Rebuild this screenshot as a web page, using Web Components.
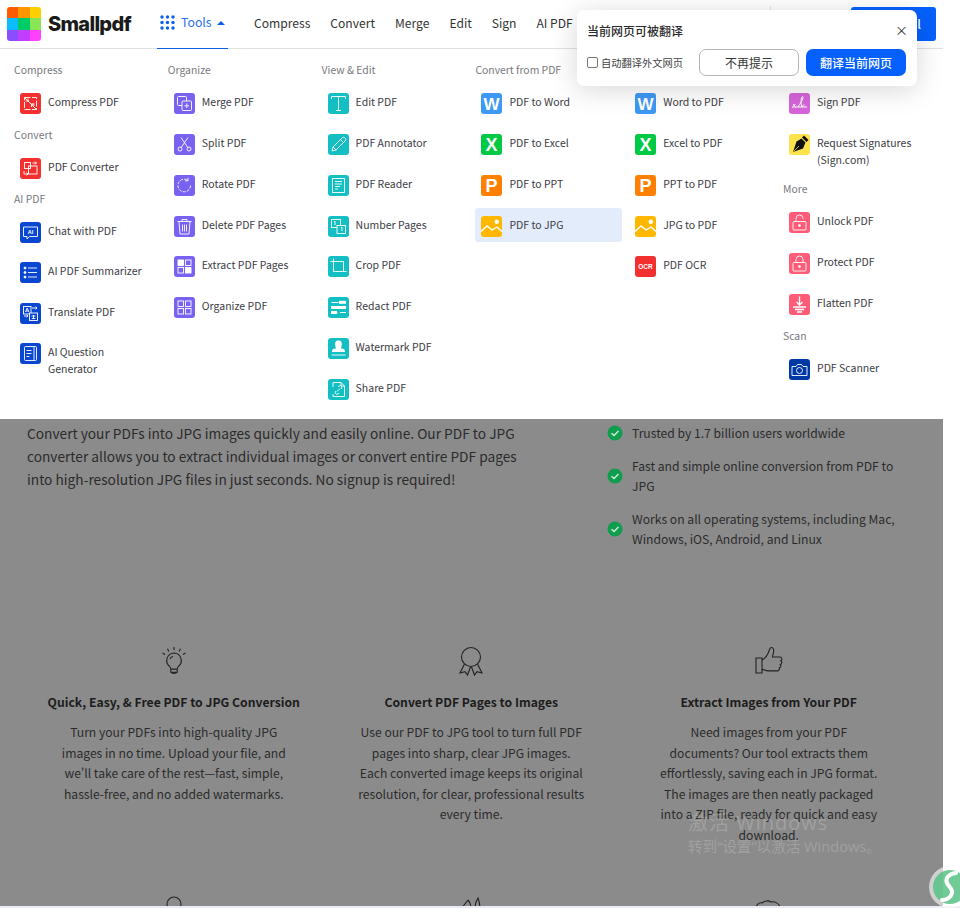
<!DOCTYPE html>
<html lang="en">
<head>
<meta charset="utf-8">
<title>PDF to JPG</title>
<style>
  html, body { margin: 0; height: 908px; overflow: hidden; background: #fff; }
  body { font-family: "Noto Sans CJK SC", "Noto Sans", sans-serif; color: #2b2b2b; position: relative; }
  .shell { width: 943px; }
  .foot-line { height: 2px; background: #e8ecf4; }
</style>
</head>
<body>
<div class="shell">
  <site-header>
    <nav-link>Compress</nav-link>
    <nav-link>Convert</nav-link>
    <nav-link>Merge</nav-link>
    <nav-link>Edit</nav-link>
    <nav-link>Sign</nav-link>
    <nav-link>AI PDF</nav-link>
  </site-header>

  <tools-menu>
    <menu-column>
      <menu-group heading="Compress"><tool-item icon="compress">Compress PDF</tool-item></menu-group>
      <menu-group heading="Convert"><tool-item icon="convert">PDF Converter</tool-item></menu-group>
      <menu-group heading="AI PDF" style="margin-top:-1px">
        <tool-item icon="chat">Chat with PDF</tool-item>
        <tool-item icon="summary" style="margin-top:-1px">AI PDF Summarizer</tool-item>
        <tool-item icon="translate">Translate PDF</tool-item>
        <tool-item icon="question" style="margin-top:-1px">AI Question<br>Generator</tool-item>
      </menu-group>
    </menu-column>
    <menu-column>
      <menu-group heading="Organize">
        <tool-item icon="merge">Merge PDF</tool-item>
        <tool-item icon="split">Split PDF</tool-item>
        <tool-item icon="rotate">Rotate PDF</tool-item>
        <tool-item icon="trash">Delete PDF Pages</tool-item>
        <tool-item icon="extract">Extract PDF Pages</tool-item>
        <tool-item icon="organize">Organize PDF</tool-item>
      </menu-group>
    </menu-column>
    <menu-column>
      <menu-group heading="View &amp; Edit">
        <tool-item icon="edit">Edit PDF</tool-item>
        <tool-item icon="annotate">PDF Annotator</tool-item>
        <tool-item icon="reader">PDF Reader</tool-item>
        <tool-item icon="number">Number Pages</tool-item>
        <tool-item icon="crop">Crop PDF</tool-item>
        <tool-item icon="redact">Redact PDF</tool-item>
        <tool-item icon="stamp">Watermark PDF</tool-item>
        <tool-item icon="share">Share PDF</tool-item>
      </menu-group>
    </menu-column>
    <menu-column>
      <menu-group heading="Convert from PDF">
        <tool-item icon="word">PDF to Word</tool-item>
        <tool-item icon="excel">PDF to Excel</tool-item>
        <tool-item icon="ppt">PDF to PPT</tool-item>
        <tool-item icon="jpg" active>PDF to JPG</tool-item>
      </menu-group>
    </menu-column>
    <menu-column>
      <menu-group heading="Convert to PDF">
        <tool-item icon="word">Word to PDF</tool-item>
        <tool-item icon="excel">Excel to PDF</tool-item>
        <tool-item icon="ppt">PPT to PDF</tool-item>
        <tool-item icon="jpg">JPG to PDF</tool-item>
        <tool-item icon="ocr">PDF OCR</tool-item>
      </menu-group>
    </menu-column>
    <menu-column>
      <menu-group heading="Sign">
        <tool-item icon="sign">Sign PDF</tool-item>
        <tool-item icon="pen">Request Signatures<br>(Sign.com)</tool-item>
      </menu-group>
      <menu-group heading="More">
        <tool-item icon="unlock">Unlock PDF</tool-item>
        <tool-item icon="lock">Protect PDF</tool-item>
        <tool-item icon="flatten">Flatten PDF</tool-item>
      </menu-group>
      <menu-group heading="Scan"><tool-item icon="camera">PDF Scanner</tool-item></menu-group>
    </menu-column>
  </tools-menu>

  <dimmed-page>
    <intro-row>
      <span slot="lead">Convert your PDFs into JPG images quickly and easily online. Our PDF to JPG converter allows you to extract individual images or convert entire PDF pages into high-resolution JPG files in just seconds. No signup is required!</span>
      <check-item>Trusted by 1.7 billion users worldwide</check-item>
      <check-item>Fast and simple online conversion from PDF to JPG</check-item>
      <check-item>Works on all operating systems, including Mac, Windows, iOS, Android, and Linux</check-item>
    </intro-row>
    <feature-grid>
      <feature-card heading="Quick, Easy, &amp; Free PDF to JPG Conversion">
        <svg slot="icon" viewBox="0 0 32 32"><path d="M16 8a7.500 7.500 0 0 0-4.500 13.300c.8.700 1.200 1.500 1.200 2.700h6.600c0-1.200.4-2 1.200-2.700A7.500 7.500 0 0 0 16 8zM12.800 24.200h6.400v3h-6.400zM13.300 27.200c.3 1.700 5.100 1.700 5.400 0M12 14c.6-1.500 1.700-2.400 3-2.800M16 2v3M9.500 3.800l1.300 2.600M22.500 3.800l-1.300 2.600M4.500 8l2.500 1.500M27.500 8l-2.500 1.500"/></svg>
        Turn your PDFs into high-quality JPG images in no time. Upload your file, and we’ll take care of the rest—fast, simple, hassle-free, and no added watermarks.
      </feature-card>
      <feature-card heading="Convert PDF Pages to Images">
        <svg slot="icon" viewBox="0 0 32 32"><circle cx="16" cy="12" r="9.500"/><path d="M9.500 19 5 28l5-1.300L12.500 30l3-8M22.500 19 27 28l-5-1.300L19.500 30l-3-8"/></svg>
        Use our PDF to JPG tool to turn full PDF pages into sharp, clear JPG images. Each converted image keeps its original resolution, for clear, professional results every time.
      </feature-card>
      <feature-card heading="Extract Images from Your PDF" narrow>
        <svg slot="icon" viewBox="0 0 32 32"><path d="M3 13h6v15H3zM9 15c4-2 6-6 7-9 .5-2 1-3.500 2.500-3.500 2 0 2.500 2.500 2 5l-1 4.500h7.500c2 0 2.500 3 .8 3.700 1.500.8 1.200 3.300-.5 3.800 1 1 .6 3-1 3.400.5 1.300-.4 3-2 3H15c-2.500 0-4-1.500-6-1.500"/></svg>
        Need images from your PDF documents? Our tool extracts them effortlessly, saving each in JPG format. The images are then neatly packaged into a ZIP file, ready for quick and easy download.
      </feature-card>
      <feature-card>
        <svg slot="icon" viewBox="0 0 32 32"><circle cx="16" cy="9" r="7"/></svg>
      </feature-card>
      <feature-card>
        <svg slot="icon" viewBox="0 0 32 32"><path d="M6 14 13 5M13 5c2 2 3 5 3 9M20 14c0-5 1-8 3-11 1 3 2 6 2 11"/></svg>
      </feature-card>
      <feature-card>
        <svg slot="icon" viewBox="0 0 32 32"><path d="M3 14c0-4 3-7 6-6 2-2 6-3 9-1 3-1 8 1 9 5"/></svg>
      </feature-card>
    </feature-grid>
  </dimmed-page>
</div>
<div class="foot-line"></div>

<translate-popup></translate-popup>
<activation-note></activation-note>
<chat-bubble></chat-bubble>

<script>
// white line art on a coloured tile, viewBox 0 0 21 21
const RED = "#f23030", BLUE = "#0a47d1", PURPLE = "#7961f2", TEAL = "#13bfc2";
const letter = (c) => `<text x="10.500" y="17" text-anchor="middle" font-family="Liberation Sans, sans-serif" font-weight="700" font-size="18" fill="#fff" stroke="none">${c}</text>`;
const photo = `<path d="M0 15.500 6 10l5 4 5-3 5 4.500" stroke-width="1.400"/><circle cx="15.800" cy="5.700" r="2.200" fill="#fff" stroke="none"/>`;

const TOOL_ICONS = {
  compress: [RED, `<rect x="4.500" y="4.500" width="12" height="12" stroke-dasharray="6 1.500"/><path d="M4.500 4.500l12 12M8 9V5.500M9 8H5.500M12 10.500l2.500 2.500M11.500 14v-3h3"/>`],
  convert: [RED, `<rect x="8.500" y="8" width="8.500" height="8"/><rect x="4.500" y="4.500" width="6" height="6"/><path d="M12.500 5h4M15 3.500 16.500 5 15 6.500M4 13v3h4M6.500 14.500 8 16l-1.500 1.500"/>`],
  chat: [BLUE, `<path d="M3.500 5h14v9.500H9.500L7 17v-2.500H3.500z"/><text x="10.500" y="12" text-anchor="middle" font-family="Liberation Sans, sans-serif" font-weight="700" font-size="5.500" fill="#fff" stroke="none">AI</text>`],
  summary: [BLUE, `<path d="M8 6h9M8 10.500h9M8 15h9"/><circle cx="5" cy="6" r="1" fill="#fff"/><circle cx="5" cy="10.500" r="1" fill="#fff"/><circle cx="5" cy="15" r="1" fill="#fff"/>`],
  translate: [BLUE, `<rect x="3.500" y="3.500" width="7.500" height="7.500"/><rect x="9.500" y="10" width="8" height="7.500" fill="${BLUE}"/><path d="M5.500 9l1.700-4 1.700 4M6 8h2.500M12 5h5M15.500 3.800 17 5l-1.500 1.200M4 13h3.500M6.500 11.800 8 13l-1.500 1.200M11.500 13h4M13.500 12v4M11.800 15.500h3.500"/>`],
  question: [BLUE, `<rect x="4.500" y="3.500" width="12" height="14" rx="1"/><path d="M14 3.500v14M6.500 7.500h5M6.500 10.500h5M6.500 13.500h3"/>`],
  merge: [PURPLE, `<rect x="3.500" y="3.500" width="9" height="9" rx="1"/><rect x="8" y="8" width="9.500" height="9.500" rx="1" fill="${PURPLE}"/><path d="M12.800 10.500v4.500M10.500 12.800H15"/>`],
  split: [PURPLE, `<circle cx="6" cy="15" r="2"/><circle cx="15" cy="15" r="2"/><path d="M7.200 13.500 14 3.500M13.800 13.500 7 3.500"/>`],
  rotate: [PURPLE, `<path d="M16.500 10.500a6.300 6.300 0 1 1-2.500-5" stroke-dasharray="3 1.200"/><path d="M14 2.800v3h-3"/>`],
  trash: [PURPLE, `<path d="M3.500 5.500h14M8 5.500V3.500h5v2M5 5.500l1 12.500h9l1-12.500M8.500 8.500v7M10.500 8.500v7M12.500 8.500v7"/>`],
  extract: [PURPLE, `<rect x="4" y="4" width="5.500" height="5.500" fill="#fff"/><rect x="11.500" y="4" width="5.500" height="5.500"/><rect x="4" y="11.500" width="5.500" height="5.500"/><rect x="11.500" y="11.500" width="5.500" height="5.500" fill="#fff"/>`],
  organize: [PURPLE, `<rect x="4" y="4" width="5.500" height="5.500"/><rect x="11.500" y="4" width="5.500" height="5.500"/><rect x="4" y="11.500" width="5.500" height="5.500"/><rect x="11.500" y="11.500" width="5.500" height="5.500"/>`],
  edit: [TEAL, `<path d="M3.500 6V3.500h14V6M10.500 3.500v14M8 17.500h5"/>`],
  annotate: [TEAL, `<path d="M4 17l1-4L14 4c1-1 2-1 3 0s1 2 0 3l-9 9zM12.500 5.500l3 3M5 13l3 3"/>`],
  reader: [TEAL, `<rect x="4.500" y="3.500" width="12" height="14"/><path d="M7 6.500h7M7 9h7M7 11.500h5M7 14h3"/>`],
  number: [TEAL, `<rect x="3.500" y="3.500" width="9" height="8"/><rect x="9" y="9.500" width="8.500" height="8" fill="${TEAL}"/><path d="M6 6l1-.8V9M13 12l1-.8V15"/>`],
  crop: [TEAL, `<path d="M5.500 2.500v13h13M2.500 5.500h13v10"/>`],
  redact: [TEAL, `<path d="M3.500 5.500h7M13 5.500h5M3.500 15.500h6M12 15.500h6" stroke-width="1"/><rect x="3" y="9" width="15" height="3" fill="#fff" stroke="none"/><rect x="11" y="3.800" width="7" height="3" fill="#fff" stroke="none"/><rect x="3" y="14" width="6" height="3" fill="#fff" stroke="none"/>`],
  stamp: [TEAL, `<path d="M8 10.500C6 4 8 2.500 10.500 2.500S15 4 13 10.500c3 .3 4 .8 4 3.500H4c0-2.700 1-3.200 4-3.500z" fill="#fff" stroke="none"/><path d="M3.500 17h14"/>`],
  share: [TEAL, `<path d="M5 8V3.500h8l3.500 3.500v10.500H5V15"/><path d="M13 3.500V7h3.500M9 12.500l3-3M8 12a1.500 1.500 0 0 0 2 3l1-1M13 10a1.500 1.500 0 0 0-2-3l-1 1"/>`],
  word: ["#3d99f5", letter("W").replace('font-size="18"', 'font-size="17"')],
  excel: ["#00c944", letter("X")],
  ppt: ["#ff7f00", letter("P")],
  jpg: ["#ffb700", photo],
  ocr: [RED, `<text x="10.500" y="12.800" text-anchor="middle" font-family="Liberation Sans, sans-serif" font-weight="700" font-size="6.500" fill="#fff" stroke="none">OCR</text>`],
  sign: ["#d665d9", `<path d="M3 14h15M4 11l2.500 2.500M6.500 11 4 13.500M9 14c2-3 4-6 5-9 .5-2-1-2-1.500 0-.7 3-.7 7 .5 9 1-2 2-2.500 2.500-2" stroke-width="1"/>`],
  pen: ["#ffe34d", `<path d="M15 1.500 19.500 6l-2 2-4.500-4.500zM12.500 4.500l4 4-2.500 6L4 18l3.500-10.500z" fill="#111" stroke="none"/><path d="M4.500 17.500 10 12" stroke="#ffe34d" stroke-width=".8"/>`],
  unlock: ["#ff5c77", `<rect x="4" y="9.500" width="13" height="8.500" rx="1"/><path d="M7 9.500V6.500a3.500 3.500 0 0 1 7 0"/><circle cx="10.500" cy="13.500" r="1" fill="#fff"/>`],
  lock: ["#ff5c77", `<rect x="4" y="9.500" width="13" height="8.500" rx="1"/><path d="M7 9.500V6.500a3.500 3.500 0 0 1 7 0v3"/><circle cx="10.500" cy="13.500" r="1" fill="#fff"/>`],
  flatten: ["#ff5c77", `<path d="M10.500 2.500v8M7.500 8l3 3 3-3" stroke-width="1.300"/><path d="M4 13h13" stroke-width="1.300"/><path d="M6 15.500h9M8 18h5" stroke-width="1.300"/>`],
  camera: ["#0039a6", `<path d="M3 7.500h4l1.500-2h4l1.500 2h4v9H3z"/><circle cx="10.500" cy="11.500" r="3"/>`],
};

class SiteHeader extends HTMLElement {
  constructor() {
    super();
    this.attachShadow({ mode: "open" });
    this.shadowRoot.innerHTML = `
    <style>
      :host { display: flex; align-items: center; height: 48px; border-bottom: 1px solid #dfe1e6; background: #fff; padding-left: 7px; }
      .mark { display: grid; grid-template: repeat(3, 1fr) / repeat(3, 1fr); width: 34px; height: 34px; border-radius: 3px; overflow: hidden; flex: none; }
      .word { font: 800 20px/34px Inter, "Liberation Sans", sans-serif; letter-spacing: -.7px; color: #1a1a1a; margin-left: 7px; width: 85px; flex: none; }
      .tools { display: flex; align-items: center; align-self: stretch; margin-left: 24px; width: 71px; padding-left: 3px; box-sizing: border-box; border-bottom: 1.500px solid #0d5fe8; color: #2a6ff0; font-size: 12.300px; flex: none; margin-bottom: -1px; }
      .tools svg { width: 15px; height: 15px; fill: #0d5fe8; margin-right: 6px; margin-top: -3px; }
      .tools span { line-height: 17px; margin-top: -3px; }
      .caret { width: 0; height: 0; border: 4px solid transparent; border-top: 0; border-bottom: 4px solid #0d5fe8; margin: -3px 0 0 5px; }
      .links { display: flex; gap: 20px; margin-left: 26px; margin-top: -2px; width: 345px; flex: none; white-space: nowrap; overflow: hidden; }
      .right { display: flex; align-items: center; margin-left: auto; margin-right: 7px; }
      .rule { width: 1px; height: 36px; background: #dfe1e6; margin-right: 80px; }
      button { width: 85px; height: 34px; border: 0; border-radius: 3px; background: #0560fd; color: #fff; font: 500 12.300px "Noto Sans CJK SC", sans-serif; padding: 0 15px 0 0; text-align: right; }
    </style>
    <div class="mark">
      <i style="background:#ff5b00"></i><i style="background:#ff9500"></i><i style="background:#ffd000"></i>
      <i style="background:#0bbcff"></i><i style="background:#00cc66"></i><i style="background:#88e655"></i>
      <i style="background:#8a4dff"></i><i style="background:#c13dff"></i><i style="background:#ff40ff"></i>
    </div>
    <div class="word">Smallpdf</div>
    <div class="tools">
      <svg viewBox="0 0 15 15"><circle cx="2" cy="2" r="1.700"/><circle cx="7.500" cy="2" r="1.700"/><circle cx="13" cy="2" r="1.700"/><circle cx="2" cy="7.500" r="1.700"/><circle cx="7.500" cy="7.500" r="1.700"/><circle cx="13" cy="7.500" r="1.700"/><circle cx="2" cy="13" r="1.700"/><circle cx="7.500" cy="13" r="1.700"/><circle cx="13" cy="13" r="1.700"/></svg>
      <span>Tools</span><i class="caret"></i>
    </div>
    <div class="links"><slot></slot></div>
    <div class="right"><i class="rule"></i><button>Free Trial</button></div>
    `;
  }
}

class NavLink extends HTMLElement {
  constructor() {
    super();
    this.attachShadow({ mode: "open" });
    this.shadowRoot.innerHTML = `
    <style>:host { display: block; font-size: 12.100px; line-height: 20px; color: #333; }</style>
    <slot></slot>
    `;
  }
}

class ToolsMenu extends HTMLElement {
  constructor() {
    super();
    this.attachShadow({ mode: "open" });
    this.shadowRoot.innerHTML = `
    <style>
      :host { display: grid; grid-template-columns: repeat(6, 153.800px); padding: 11.300px 0 13.700px 14px; background: #fff; height: 345px; overflow: hidden; }
    </style>
    <slot></slot>
    `;
  }
}

class MenuColumn extends HTMLElement {
  constructor() {
    super();
    this.attachShadow({ mode: "open" });
    this.shadowRoot.innerHTML = `
    <style>:host { display: flex; flex-direction: column; gap: 6px; }</style>
    <slot></slot>
    `;
  }
}

class MenuGroup extends HTMLElement {
  constructor() {
    super();
    this.attachShadow({ mode: "open" });
    this.shadowRoot.innerHTML = `
    <style>
      :host { display: block; }
      h4 { margin: 0 0 5px; font-size: 10.400px; font-weight: 400; line-height: 20px; color: #77787c; }
      .items { display: flex; flex-direction: column; gap: 6.800px; }
    </style>
    <h4></h4>
    <div class="items"><slot></slot></div>
    `;
    this.shadowRoot.querySelector("h4").textContent = this.getAttribute("heading");
  }
}

class ToolItem extends HTMLElement {
  constructor() {
    super();
    this.attachShadow({ mode: "open" });
    const [bg, art] = TOOL_ICONS[this.getAttribute("icon")];
    this.shadowRoot.innerHTML = `
    <style>
      :host { display: flex; gap: 7px; width: 147px; min-height: 34px; box-sizing: border-box; padding: 8px 6px 5px; border-radius: 3px; font-size: 10.500px; line-height: 17px; color: #3c3c44; }
      :host([active]) { background: #e3ecfb; }
      svg { flex: none; width: 21px; height: 21px; border-radius: 3px; background: ${bg}; fill: none; stroke: #fff; stroke-width: .9; }
    </style>
    <svg viewBox="0 0 21 21">${art}</svg>
    <span><slot></slot></span>
    `;
  }
}

class DimmedPage extends HTMLElement {
  constructor() {
    super();
    this.attachShadow({ mode: "open" });
    this.shadowRoot.innerHTML = `
    <style>:host { display: block; height: 487px; overflow: hidden; background: #8b8b8b; color: #2b2b2b; }</style>
    <slot></slot>
    `;
  }
}

class IntroRow extends HTMLElement {
  constructor() {
    super();
    this.attachShadow({ mode: "open" });
    this.shadowRoot.innerHTML = `
    <style>
      :host { display: flex; padding: 3px 0 0 27px; height: 207px; }
      .lead { width: 500px; font-size: 13.720px; line-height: 23px; flex: none; }
      .checks { display: flex; flex-direction: column; gap: 13.200px; width: 292px; margin-left: 80px; margin-top: 1px; }
    </style>
    <div class="lead"><slot name="lead"></slot></div>
    <div class="checks"><slot></slot></div>
    `;
  }
}

class CheckItem extends HTMLElement {
  constructor() {
    super();
    this.attachShadow({ mode: "open" });
    this.shadowRoot.innerHTML = `
    <style>
      :host { display: flex; align-items: center; gap: 9px; font-size: 12.150px; line-height: 20px; }
      svg { flex: none; width: 16px; height: 16px; }
    </style>
    <svg viewBox="0 0 16 16"><circle cx="8" cy="8" r="7.500" fill="#0f9d4f"/><path d="M4.500 8.200 7 10.500l4.500-4.500" fill="none" stroke="#cfe9d8" stroke-width="1.500"/></svg>
    <span><slot></slot></span>
    `;
  }
}

class FeatureGrid extends HTMLElement {
  constructor() {
    super();
    this.attachShadow({ mode: "open" });
    this.shadowRoot.innerHTML = `
    <style>:host { display: grid; grid-template-columns: repeat(3, 297.500px); padding: 16px 0 0 25px; }</style>
    <slot></slot>
    `;
  }
}

class FeatureCard extends HTMLElement {
  constructor() {
    super();
    this.attachShadow({ mode: "open" });
    const heading = this.getAttribute("heading") || "";
    this.shadowRoot.innerHTML = `
    <style>
      :host { display: flex; flex-direction: column; align-items: center; text-align: center; height: 250px; }
      ::slotted(svg) { width: 32px; height: 32px; fill: none; stroke: #222; stroke-width: 1.100; flex: none; }
      h3 { margin: 15px 0 10.500px; font-size: 12.200px; line-height: 20px; font-weight: 700; color: #1c1c1c; width: 280px; min-height: 20px; }
      p { margin: 0; width: 227px; font-size: 12.150px; line-height: 20.400px; font-feature-settings: "pwid"; }
      :host([narrow]) p { width: 219px; }
    </style>
    <slot name="icon"></slot>
    <h3></h3>
    <p><slot></slot></p>
    `;
    this.shadowRoot.querySelector("h3").textContent = heading;
  }
}

class TranslatePopup extends HTMLElement {
  constructor() {
    super();
    this.attachShadow({ mode: "open" });
    this.shadowRoot.innerHTML = `
    <style>
      :host { position: absolute; left: 577px; top: 10px; width: 340px; height: 76px; box-sizing: border-box; padding: 10px 11px 0 10px; background: #fff; border-radius: 7px; box-shadow: 0 4px 28px rgba(0,0,0,.16); color: #2b2b2b; }
      .top { display: flex; justify-content: space-between; align-items: center; height: 20px; font-size: 12px; font-weight: 500; }
      .close { font-size: 13px; color: #333; font-weight: 400; margin-right: -2px; margin-top: -1px; }
      .row { display: flex; align-items: center; margin-top: 9px; }
      .box { width: 9px; height: 9px; border: 1px solid #777; border-radius: 2px; margin-right: 3px; flex: none; }
      label { font-size: 10.250px; width: 98px; flex: none; color: #444; }
      .ghost, .go { width: 100px; height: 27px; box-sizing: border-box; border-radius: 7px; font-size: 12px; line-height: 25px; text-align: center; flex: none; }
      .ghost { border: 1px solid #b5b5b5; color: #333; }
      .go { background: #0560fd; color: #fff; margin-left: 7px; line-height: 27px; font-weight: 500; }
    </style>
    <div class="top"><span>当前网页可被翻译</span><span class="close">×</span></div>
    <div class="row"><i class="box"></i><label>自动翻译外文网页</label><div class="ghost">不再提示</div><div class="go">翻译当前网页</div></div>
    `;
  }
}

class ActivationNote extends HTMLElement {
  constructor() {
    super();
    this.attachShadow({ mode: "open" });
    this.shadowRoot.innerHTML = `
    <style>
      :host { position: absolute; left: 688px; top: 809px; color: rgba(255,255,255,.2); pointer-events: none; font-family: "Open Sans", "Noto Sans CJK SC", sans-serif; }
      div { font-size: 20px; line-height: 27px; letter-spacing: 1px; white-space: nowrap; }
      small { display: block; font-size: 14.600px; line-height: 20px; white-space: nowrap; }
    </style>
    <div>激活 Windows</div>
    <small>转到“设置”以激活 Windows。</small>
    `;
  }
}

class ChatBubble extends HTMLElement {
  constructor() {
    super();
    this.attachShadow({ mode: "open" });
    this.shadowRoot.innerHTML = `
    <style>
      :host { position: absolute; left: 928px; top: 866px; width: 32px; height: 42px; overflow: hidden; }
      svg { width: 44px; height: 42px; display: block; }
    </style>
    <svg viewBox="0 0 44 42"><circle cx="22" cy="21" r="21" fill="#fff" fill-opacity=".6"/><circle cx="22" cy="21" r="17" fill="#58c285" fill-opacity=".85"/><path d="M28 7C20 8 17 13 19 17c2 4 6 6 5 10-1 4-5 7-10 7" fill="none" stroke="#fff" stroke-width="4" stroke-linecap="round"/></svg>
    `;
  }
}

customElements.define("site-header", SiteHeader);
customElements.define("nav-link", NavLink);
customElements.define("tools-menu", ToolsMenu);
customElements.define("menu-column", MenuColumn);
customElements.define("menu-group", MenuGroup);
customElements.define("tool-item", ToolItem);
customElements.define("dimmed-page", DimmedPage);
customElements.define("intro-row", IntroRow);
customElements.define("check-item", CheckItem);
customElements.define("feature-grid", FeatureGrid);
customElements.define("feature-card", FeatureCard);
customElements.define("translate-popup", TranslatePopup);
customElements.define("activation-note", ActivationNote);
customElements.define("chat-bubble", ChatBubble);
</script>
</body>
</html>
